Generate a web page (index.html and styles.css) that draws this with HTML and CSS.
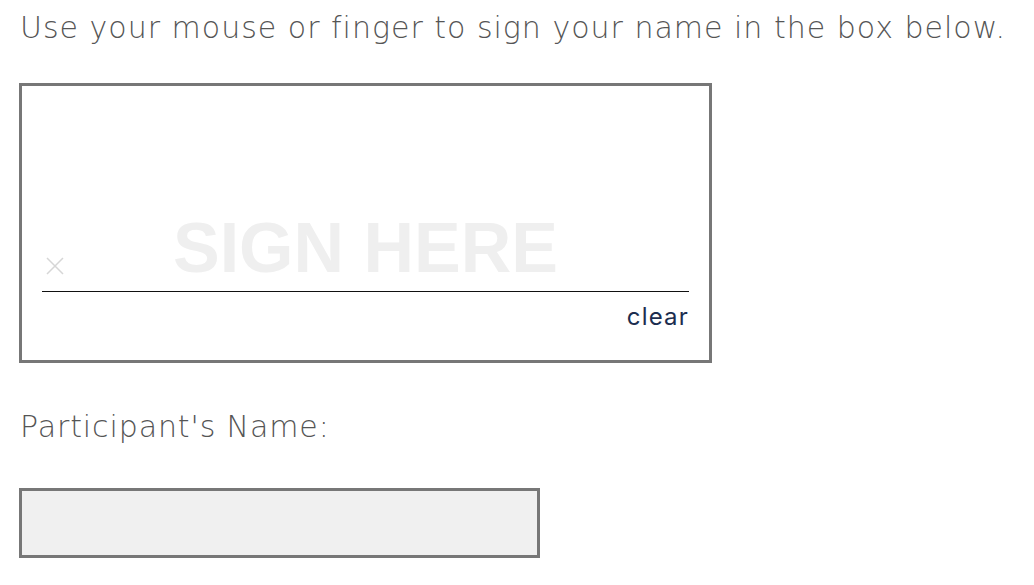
FILE: index.html
```html
<!DOCTYPE html>
<html lang="en">
<head>
    <meta charset="UTF-8">
    <meta name="viewport" content="width=device-width, initial-scale=1.0">
    <title>Sign Waiver</title>
    <link rel="stylesheet" href="styles.css">
</head>
<body>
<div class="page">
    <p class="intro">Use your mouse or finger to sign your name in the box below.</p>

    <!-- signature pad -->
    <div class="sig-box">
        <div class="sig-area">
            <svg class="sig-x" width="18" height="18" viewBox="0 0 18 18">
                <path d="M1 1 L17 17 M17 1 L1 17" stroke="#d6d6d6" stroke-width="1.5" fill="none"/>
            </svg>
            <span class="sig-placeholder">SIGN HERE</span>
        </div>
        <div class="sig-actions">
            <a href="#" class="clear-link">clear</a>
        </div>
    </div>

    <label class="field-label" for="participantName">Participant's Name:</label>
    <input type="text" id="participantName" class="name-input" autocomplete="off">
</div>
</body>
</html>
```

FILE: styles.css
```css
body {
    margin: 0;
    font-family: "DejaVu Sans", sans-serif;
    font-weight: 200;
    color: #555;
    background: #fff;
}
.page {
    padding: 10px 19px;
    display: flex;
    flex-direction: column;
    align-items: flex-start;
}
.intro {
    margin: 0 0 0 1px;
    font-size: 30px;
    letter-spacing: 1px;
    line-height: 36px;
}
.sig-box {
    margin-top: 37px;
    width: 693px;
    height: 280px;
    box-sizing: border-box;
    border: 3px solid #777;
    padding: 0 20px;
}
.sig-area {
    position: relative;
    height: 205px;
    border-bottom: 1px solid #111;
    display: flex;
    align-items: flex-end;
    justify-content: center;
}
.sig-x {
    position: absolute;
    left: 4px;
    bottom: 16px;
}
.sig-placeholder {
    font-family: "Liberation Sans", Arial, sans-serif;
    font-weight: 700;
    font-size: 70px;
    line-height: 70px;
    color: #efefef;
    margin-bottom: 8px;
}
.sig-actions {
    display: flex;
    justify-content: flex-end;
    padding-top: 10px;
}
.clear-link {
    font-family: Inter, sans-serif;
    font-weight: 400;
    font-size: 24px;
    letter-spacing: 1.2px;
    color: #1b2d4f;
    text-decoration: none;
}
.field-label {
    margin: 46px 0 0 1px;
    font-size: 30px;
    letter-spacing: 0.9px;
    line-height: 36px;
}
.name-input {
    margin-top: 43px;
    width: 521px;
    height: 70px;
    box-sizing: border-box;
    border: 3px solid #777;
    background: #f0f0f0;
    padding: 0 12px;
    font-size: 22px;
}
```
